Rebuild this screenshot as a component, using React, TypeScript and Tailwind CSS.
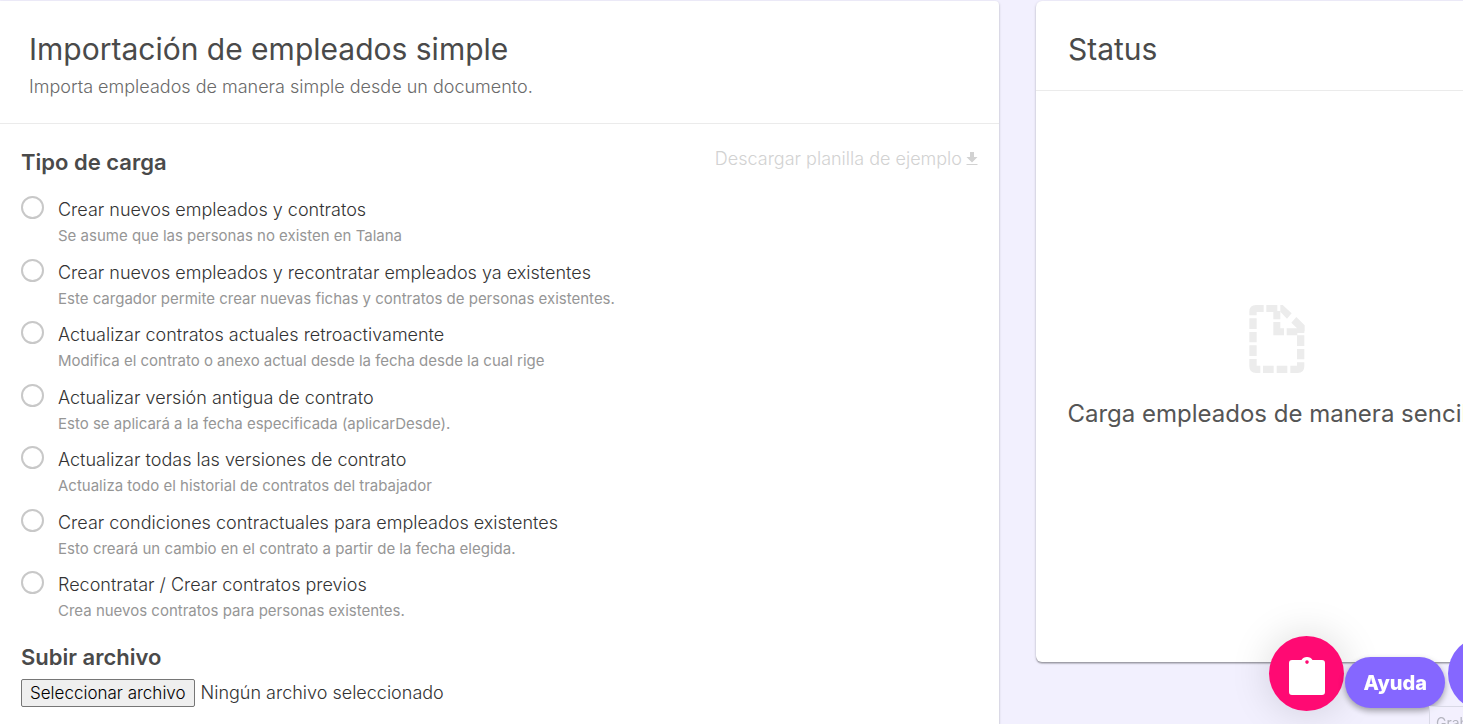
import { useRef, useState } from "react";

interface LoadType {
    id: string;
    title: string;
    description: string;
}

const loadTypes: LoadType[] = [
    {
        id: "create",
        title: "Crear nuevos empleados y contratos",
        description: "Se asume que las personas no existen en Talana",
    },
    {
        id: "create-rehire",
        title: "Crear nuevos empleados y recontratar empleados ya existentes",
        description: "Este cargador permite crear nuevas fichas y contratos de personas existentes.",
    },
    {
        id: "update-current",
        title: "Actualizar contratos actuales retroactivamente",
        description: "Modifica el contrato o anexo actual desde la fecha desde la cual rige",
    },
    {
        id: "update-old",
        title: "Actualizar versión antigua de contrato",
        description: "Esto se aplicará a la fecha especificada (aplicarDesde).",
    },
    {
        id: "update-all",
        title: "Actualizar todas las versiones de contrato",
        description: "Actualiza todo el historial de contratos del trabajador",
    },
    {
        id: "conditions",
        title: "Crear condiciones contractuales para empleados existentes",
        description: "Esto creará un cambio en el contrato a partir de la fecha elegida.",
    },
    {
        id: "rehire",
        title: "Recontratar / Crear contratos previos",
        description: "Crea nuevos contratos para personas existentes.",
    },
]

const DownloadIcon = () => (
    <svg viewBox="0 0 12 14" className="w-3 h-[14px] shrink-0" fill="currentColor" aria-hidden="true">
        <path d="M4 0h4v5h3.500L6 10.500.5 5H4z" />
        <path d="M.5 12h11v1H.5z" />
    </svg>
)

const DashedFileIcon = () => (
    <svg viewBox="0 0 166 204" className="w-14 h-[68px]" fill="#ececec" aria-hidden="true">
        <path d="M20 0H43V21H22V31H0V20Q0 0 20 0z" />
        <path d="M51 0H84V18H93V43H72V21H51z" />
        <path d="M93 0H100L127 25L113 41L93 20z" />
        <path d="M141 36L166 61V79H165V84H144V91H112V70H143L126 53z" />
        <path d="M72 51H93V70H104V91H72z" />
        <path d="M0 40H22V72H0zM0 81H22V112H0zM0 121H22V153H0z" />
        <path d="M143 91H165V123H143zM143 132H165V163H143z" />
        <path d="M0 162H22V182H33V204H20Q0 204 0 184z" />
        <path d="M41 182H73V204H41zM82 182H114V204H82z" />
        <path d="M143 172H165V184Q165 204 145 204H123V182H143z" />
    </svg>
)

const ClipboardIcon = () => (
    <svg viewBox="0 0 36 38" className="w-9 h-[38px]" fill="#fff" aria-hidden="true">
        <path fillRule="evenodd" d="M3 3H12.500C13.500 1 15.500 0 18 0s4.500 1 5.500 3H33a3 3 0 0 1 3 3V35a3 3 0 0 1-3 3H3a3 3 0 0 1-3-3V6a3 3 0 0 1 3-3zM18 3.300a1.800 1.800 0 1 0 0 3.600 1.800 1.800 0 0 0 0-3.600z" />
    </svg>
)

const App = () => {
    const [selected, setSelected] = useState("");
    const [fileName, setFileName] = useState("");
    const fileInput = useRef<HTMLInputElement>(null);

    return (
        <div className="min-h-screen overflow-hidden bg-[#f2f0fe] font-['Inter',sans-serif] text-[#4a4a4a]">
            <main className="-mr-[55px] pt-px grid grid-cols-[1fr_482px] gap-[37px] items-start">
                <section className="min-h-screen bg-white rounded-tr shadow-[0_2px_1px_rgba(0,0,0,0.12),0_1px_1px_rgba(0,0,0,0.14),0_1px_3px_rgba(0,0,0,0.2)]">
                    <header className="px-[29px] pt-7 pb-[23px] border-b border-[#ebebeb]">
                        <h1 className="text-[30px] leading-10">Importación de empleados simple</h1>
                        <p className="mt-[5px] text-lg leading-[26px] font-light text-[#6a6a6a]">Importa empleados de manera simple desde un documento.</p>
                    </header>
                    <div className="px-[21px] pt-[22px]">
                        <div className="flex justify-between items-start">
                            <h2 className="text-[22px] leading-8 font-semibold">Tipo de carga</h2>
                            <button type="button" disabled className="flex items-center gap-1 text-lg leading-[26px] font-light text-[#d2d2d2]">
                                <span>Descargar planilla de ejemplo</span>
                                <DownloadIcon />
                            </button>
                        </div>
                        <div role="radiogroup" aria-label="Tipo de carga" className="mt-[18px] flex flex-col justify-between min-h-[427px]">
                            {loadTypes.map((type) => (
                                <label key={type.id} className="flex items-start gap-[14px]">
                                    <input
                                        type="radio"
                                        name="loadType"
                                        value={type.id}
                                        checked={selected === type.id}
                                        onChange={() => setSelected(type.id)}
                                        className="appearance-none w-[23px] h-[23px] shrink-0 rounded-full border-2 border-[#c8c8c8] checked:border-[7px] checked:border-[#8567ff]"
                                    />
                                    <span className="flex flex-col">
                                        <span className="text-lg leading-7 font-light text-[#333]">{type.title}</span>
                                        <span className="text-[15px] leading-6 text-[#969696]">{type.description}</span>
                                    </span>
                                </label>
                            ))}
                        </div>
                        <h2 className="mt-[18px] text-[22px] leading-8 font-semibold">Subir archivo</h2>
                        <div className="mt-[6px] flex items-center gap-[6px] font-light">
                            <input
                                ref={fileInput}
                                type="file"
                                aria-label="Subir archivo"
                                className="hidden"
                                onChange={(e) => setFileName(e.target.files?.[0]?.name ?? "")}
                            />
                            <button
                                type="button"
                                onClick={() => fileInput.current?.click()}
                                className="h-7 px-2 rounded-xs border border-[#767676] bg-[#efefef] text-[17px] leading-6 text-black"
                            >
                                Seleccionar archivo
                            </button>
                            <span className="text-lg leading-6 text-[#333]">{fileName || "Ningún archivo seleccionado"}</span>
                        </div>
                    </div>
                </section>

                <section className="min-h-[661px] flex flex-col bg-white rounded-md shadow-[0_2px_1px_rgba(0,0,0,0.12),0_1px_1px_rgba(0,0,0,0.14),0_1px_3px_rgba(0,0,0,0.2)]">
                    <header className="px-8 pt-7 pb-[21px] border-b border-[#ebebeb]">
                        <h2 className="text-[30px] leading-10">Status</h2>
                    </header>
                    <div className="flex-1 flex flex-col items-center justify-center gap-[25px] pb-[18px]">
                        <DashedFileIcon />
                        <p className="text-2xl leading-8 whitespace-nowrap text-[#555]">Carga empleados de manera sencilla</p>
                    </div>
                </section>
            </main>

            {/* floating help actions */}
            <div className="fixed bottom-[13px] -right-[60px] z-10 flex items-end">
                <button type="button" aria-label="Tareas" className="w-[75px] h-[75px] pt-1 rounded-full bg-[#ff0a73] flex justify-center items-center shadow-[0_0_40px_rgba(0,0,0,0.15)]">
                    <ClipboardIcon />
                </button>
                <button type="button" className="ml-px mb-[3px] h-[51px] px-[18px] rounded-full bg-[#8567ff] text-xl font-extrabold text-white shadow-[0_3px_6px_rgba(0,0,0,0.35)]">
                    Ayuda
                </button>
                <button type="button" aria-label="Chat" className="ml-[3px] w-[75px] h-[75px] rounded-full bg-[#8567ff]"></button>
            </div>
            <div className="fixed top-[706px] left-[1429px] z-20 px-[6px] py-1 border border-[#d9d9e6] bg-[#f2f0fe]/80 text-sm leading-6 text-[#b5b5c0]">Grabar</div>
        </div>
    )
}

export default App
